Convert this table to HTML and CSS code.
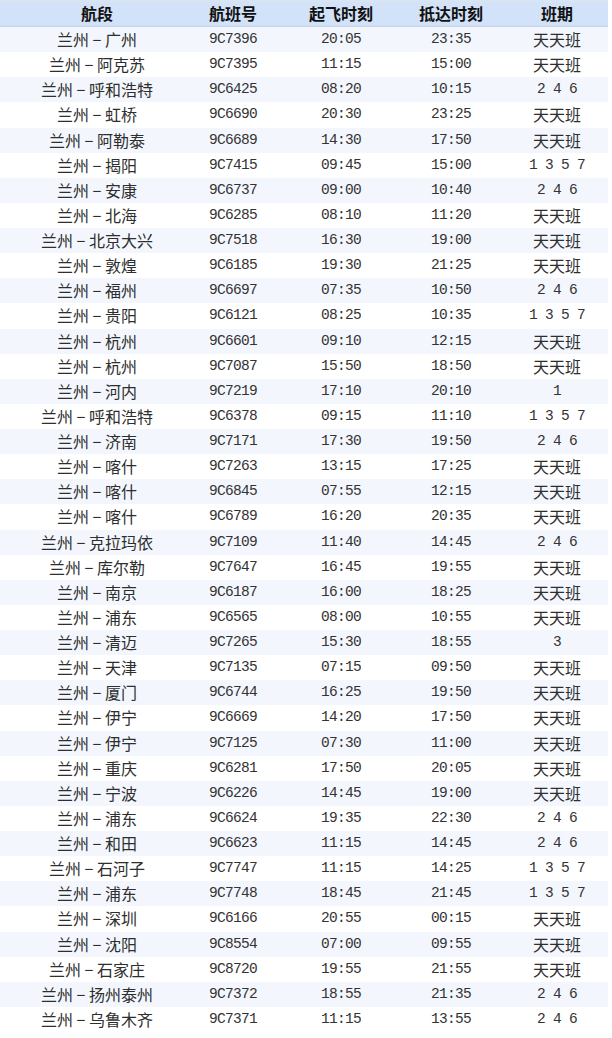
FILE: index.html
```html
<!DOCTYPE html>
<html lang="zh-CN">
<head>
<meta charset="utf-8">
<title>航班时刻</title>
<link rel="stylesheet" href="styles.css">
</head>
<body>
<div class="table">
  <div class="row head">
    <div class="c">航段</div><div class="c">航班号</div><div class="c">起飞时刻</div><div class="c">抵达时刻</div><div class="c last">班期</div>
  </div>
  <div class="row"><div class="c zh">兰州<span class="d">－</span>广州</div><div class="c mono">9C7396</div><div class="c mono">20:05</div><div class="c mono">23:35</div><div class="c last zh">天天班</div></div>
  <div class="row"><div class="c zh">兰州<span class="d">－</span>阿克苏</div><div class="c mono">9C7395</div><div class="c mono">11:15</div><div class="c mono">15:00</div><div class="c last zh">天天班</div></div>
  <div class="row"><div class="c zh">兰州<span class="d">－</span>呼和浩特</div><div class="c mono">9C6425</div><div class="c mono">08:20</div><div class="c mono">10:15</div><div class="c last mono">2 4 6</div></div>
  <div class="row"><div class="c zh">兰州<span class="d">－</span>虹桥</div><div class="c mono">9C6690</div><div class="c mono">20:30</div><div class="c mono">23:25</div><div class="c last zh">天天班</div></div>
  <div class="row"><div class="c zh">兰州<span class="d">－</span>阿勒泰</div><div class="c mono">9C6689</div><div class="c mono">14:30</div><div class="c mono">17:50</div><div class="c last zh">天天班</div></div>
  <div class="row"><div class="c zh">兰州<span class="d">－</span>揭阳</div><div class="c mono">9C7415</div><div class="c mono">09:45</div><div class="c mono">15:00</div><div class="c last mono">1 3 5 7</div></div>
  <div class="row"><div class="c zh">兰州<span class="d">－</span>安康</div><div class="c mono">9C6737</div><div class="c mono">09:00</div><div class="c mono">10:40</div><div class="c last mono">2 4 6</div></div>
  <div class="row"><div class="c zh">兰州<span class="d">－</span>北海</div><div class="c mono">9C6285</div><div class="c mono">08:10</div><div class="c mono">11:20</div><div class="c last zh">天天班</div></div>
  <div class="row"><div class="c zh">兰州<span class="d">－</span>北京大兴</div><div class="c mono">9C7518</div><div class="c mono">16:30</div><div class="c mono">19:00</div><div class="c last zh">天天班</div></div>
  <div class="row"><div class="c zh">兰州<span class="d">－</span>敦煌</div><div class="c mono">9C6185</div><div class="c mono">19:30</div><div class="c mono">21:25</div><div class="c last zh">天天班</div></div>
  <div class="row"><div class="c zh">兰州<span class="d">－</span>福州</div><div class="c mono">9C6697</div><div class="c mono">07:35</div><div class="c mono">10:50</div><div class="c last mono">2 4 6</div></div>
  <div class="row"><div class="c zh">兰州<span class="d">－</span>贵阳</div><div class="c mono">9C6121</div><div class="c mono">08:25</div><div class="c mono">10:35</div><div class="c last mono">1 3 5 7</div></div>
  <div class="row"><div class="c zh">兰州<span class="d">－</span>杭州</div><div class="c mono">9C6601</div><div class="c mono">09:10</div><div class="c mono">12:15</div><div class="c last zh">天天班</div></div>
  <div class="row"><div class="c zh">兰州<span class="d">－</span>杭州</div><div class="c mono">9C7087</div><div class="c mono">15:50</div><div class="c mono">18:50</div><div class="c last zh">天天班</div></div>
  <div class="row"><div class="c zh">兰州<span class="d">－</span>河内</div><div class="c mono">9C7219</div><div class="c mono">17:10</div><div class="c mono">20:10</div><div class="c last mono">1</div></div>
  <div class="row"><div class="c zh">兰州<span class="d">－</span>呼和浩特</div><div class="c mono">9C6378</div><div class="c mono">09:15</div><div class="c mono">11:10</div><div class="c last mono">1 3 5 7</div></div>
  <div class="row"><div class="c zh">兰州<span class="d">－</span>济南</div><div class="c mono">9C7171</div><div class="c mono">17:30</div><div class="c mono">19:50</div><div class="c last mono">2 4 6</div></div>
  <div class="row"><div class="c zh">兰州<span class="d">－</span>喀什</div><div class="c mono">9C7263</div><div class="c mono">13:15</div><div class="c mono">17:25</div><div class="c last zh">天天班</div></div>
  <div class="row"><div class="c zh">兰州<span class="d">－</span>喀什</div><div class="c mono">9C6845</div><div class="c mono">07:55</div><div class="c mono">12:15</div><div class="c last zh">天天班</div></div>
  <div class="row"><div class="c zh">兰州<span class="d">－</span>喀什</div><div class="c mono">9C6789</div><div class="c mono">16:20</div><div class="c mono">20:35</div><div class="c last zh">天天班</div></div>
  <div class="row"><div class="c zh">兰州<span class="d">－</span>克拉玛依</div><div class="c mono">9C7109</div><div class="c mono">11:40</div><div class="c mono">14:45</div><div class="c last mono">2 4 6</div></div>
  <div class="row"><div class="c zh">兰州<span class="d">－</span>库尔勒</div><div class="c mono">9C7647</div><div class="c mono">16:45</div><div class="c mono">19:55</div><div class="c last zh">天天班</div></div>
  <div class="row"><div class="c zh">兰州<span class="d">－</span>南京</div><div class="c mono">9C6187</div><div class="c mono">16:00</div><div class="c mono">18:25</div><div class="c last zh">天天班</div></div>
  <div class="row"><div class="c zh">兰州<span class="d">－</span>浦东</div><div class="c mono">9C6565</div><div class="c mono">08:00</div><div class="c mono">10:55</div><div class="c last zh">天天班</div></div>
  <div class="row"><div class="c zh">兰州<span class="d">－</span>清迈</div><div class="c mono">9C7265</div><div class="c mono">15:30</div><div class="c mono">18:55</div><div class="c last mono">3</div></div>
  <div class="row"><div class="c zh">兰州<span class="d">－</span>天津</div><div class="c mono">9C7135</div><div class="c mono">07:15</div><div class="c mono">09:50</div><div class="c last zh">天天班</div></div>
  <div class="row"><div class="c zh">兰州<span class="d">－</span>厦门</div><div class="c mono">9C6744</div><div class="c mono">16:25</div><div class="c mono">19:50</div><div class="c last zh">天天班</div></div>
  <div class="row"><div class="c zh">兰州<span class="d">－</span>伊宁</div><div class="c mono">9C6669</div><div class="c mono">14:20</div><div class="c mono">17:50</div><div class="c last zh">天天班</div></div>
  <div class="row"><div class="c zh">兰州<span class="d">－</span>伊宁</div><div class="c mono">9C7125</div><div class="c mono">07:30</div><div class="c mono">11:00</div><div class="c last zh">天天班</div></div>
  <div class="row"><div class="c zh">兰州<span class="d">－</span>重庆</div><div class="c mono">9C6281</div><div class="c mono">17:50</div><div class="c mono">20:05</div><div class="c last zh">天天班</div></div>
  <div class="row"><div class="c zh">兰州<span class="d">－</span>宁波</div><div class="c mono">9C6226</div><div class="c mono">14:45</div><div class="c mono">19:00</div><div class="c last zh">天天班</div></div>
  <div class="row"><div class="c zh">兰州<span class="d">－</span>浦东</div><div class="c mono">9C6624</div><div class="c mono">19:35</div><div class="c mono">22:30</div><div class="c last mono">2 4 6</div></div>
  <div class="row"><div class="c zh">兰州<span class="d">－</span>和田</div><div class="c mono">9C6623</div><div class="c mono">11:15</div><div class="c mono">14:45</div><div class="c last mono">2 4 6</div></div>
  <div class="row"><div class="c zh">兰州<span class="d">－</span>石河子</div><div class="c mono">9C7747</div><div class="c mono">11:15</div><div class="c mono">14:25</div><div class="c last mono">1 3 5 7</div></div>
  <div class="row"><div class="c zh">兰州<span class="d">－</span>浦东</div><div class="c mono">9C7748</div><div class="c mono">18:45</div><div class="c mono">21:45</div><div class="c last mono">1 3 5 7</div></div>
  <div class="row"><div class="c zh">兰州<span class="d">－</span>深圳</div><div class="c mono">9C6166</div><div class="c mono">20:55</div><div class="c mono">00:15</div><div class="c last zh">天天班</div></div>
  <div class="row"><div class="c zh">兰州<span class="d">－</span>沈阳</div><div class="c mono">9C8554</div><div class="c mono">07:00</div><div class="c mono">09:55</div><div class="c last zh">天天班</div></div>
  <div class="row"><div class="c zh">兰州<span class="d">－</span>石家庄</div><div class="c mono">9C8720</div><div class="c mono">19:55</div><div class="c mono">21:55</div><div class="c last zh">天天班</div></div>
  <div class="row"><div class="c zh">兰州<span class="d">－</span>扬州泰州</div><div class="c mono">9C7372</div><div class="c mono">18:55</div><div class="c mono">21:35</div><div class="c last mono">2 4 6</div></div>
  <div class="row"><div class="c zh">兰州<span class="d">－</span>乌鲁木齐</div><div class="c mono">9C7371</div><div class="c mono">11:15</div><div class="c mono">13:55</div><div class="c last mono">2 4 6</div></div>
</div>
</body>
</html>
```

FILE: styles.css
```css
html, body {
  margin: 0;
  padding: 0;
  background: #ffffff;
}
body {
  font-family: "Noto Sans CJK SC", "Noto Sans", sans-serif;
  color: #2a2a2a;
}
.table {
  width: 608px;
  display: flex;
  flex-direction: column;
}
.row {
  display: grid;
  grid-template-columns: 194px 78px 138px 82px 116px;
  height: 25.13px;
  align-items: center;
  background: #ffffff;
}
.row:nth-child(even) {
  background: #f3f7fd;
}
.row.head {
  height: 27px;
  background: linear-gradient(#dbe5f2 0, #d2e2f8 4px, #d2e2f8 25px, #c6d6ec 26px);
  font-weight: 700;
  color: #111111;
  font-size: 16px;
}
.c {
  text-align: center;
  white-space: pre;
  line-height: 25px;
}
.c.last {
  padding-left: 14px;
}
.zh {
  font-size: 16px;
  font-weight: 400;
  color: #2e2e2e;
}
.d {
  display: inline-block;
  width: 16px;
  transform: scaleX(0.65);
}
.mono {
  font-family: "Liberation Mono", "DejaVu Sans Mono", monospace;
  font-size: 14.5px;
  letter-spacing: -0.7px;
  color: #333333;
}
```
